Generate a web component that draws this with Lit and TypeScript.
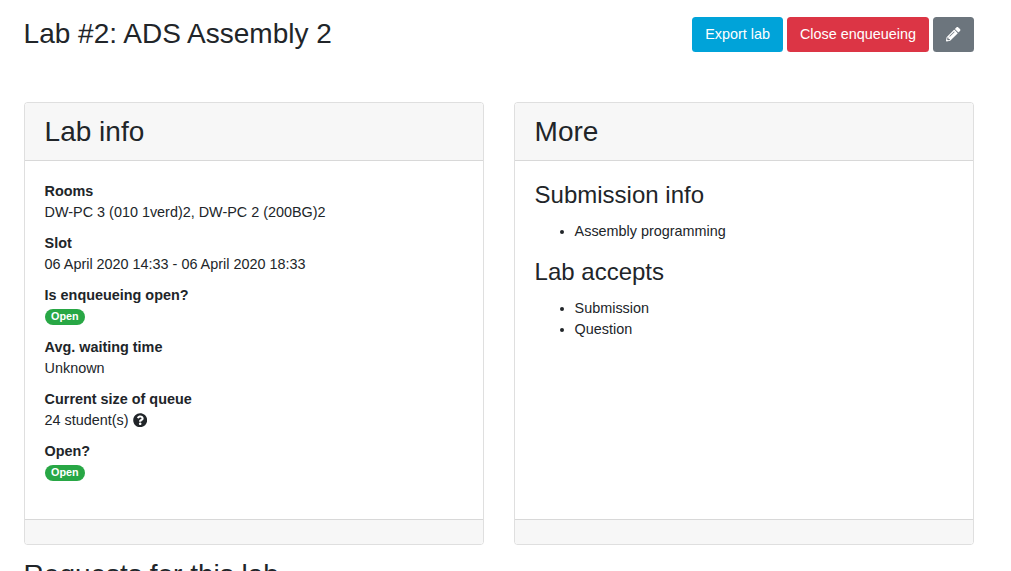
import { LitElement, html, css } from "lit";
import { customElement } from "lit/decorators.js";

@customElement("app-root")
export class AppRoot extends LitElement {
  static styles = css`
    :host {
      display: block;
      height: 571px;
      overflow: hidden;
      font-family: "Liberation Sans", Arial, sans-serif;
      font-size: 14.4px;
      line-height: 21.6px;
      color: #212529;
      background: #fff;
    }
    .page { padding: 0 37px 0 24px; }
    .top { display: flex; justify-content: space-between; align-items: flex-start; padding-top: 17px; height: 102px; box-sizing: border-box; }
    h1 { margin: 0 0 0 -0.4px; font-size: 28px; font-weight: 400; line-height: 33.6px; }
    .actions { display: flex; gap: 4px; }
    .btn { height: 35px; box-sizing: border-box; padding: 0 13px; border-radius: 3.5px; color: #fff; font-size: 14.4px; display: flex; align-items: center; }
    .info { background: #00a3d9; }
    .danger { background: #dc3545; }
    .grey { background: #6c757d; width: 41px; justify-content: center; padding: 0; }
    .cards { display: grid; grid-template-columns: 460px 460px; gap: 30px; }
    .card { height: 443px; box-sizing: border-box; border: 1px solid rgba(0,0,0,.125); border-radius: 3.5px; display: flex; flex-direction: column; overflow: hidden; }
    .head { height: 58px; box-sizing: border-box; background: #f7f7f7; border-bottom: 1px solid rgba(0,0,0,.125); padding: 0 19.6px; font-size: 28px; display: flex; align-items: center; line-height: 33.6px; }
    .body { flex: 1; padding: 20px 19.6px 0; }
    .foot { height: 25px; box-sizing: border-box; background: #f7f7f7; border-top: 1px solid rgba(0,0,0,.125); }
    .field { margin-bottom: 9.4px; }
    .label { font-weight: 700; }
    .value { min-height: 21.6px; margin-top: -0.6px; display: flex; align-items: center; gap: 4px; }
    .help { margin-bottom: 1.5px; }
    .badge { background: #28a745; color: #fff; font-size: 10.8px; font-weight: 700; line-height: 10.8px; padding: 2.5px 6.48px; border-radius: 8px; }
    h3 { margin: 0 0 10.8px; font-size: 24px; font-weight: 400; line-height: 28.8px; }
    ul { margin: 0 0 15.8px; padding-left: 40px; }
    h2 { margin: 13px 0 0 -0.4px; font-size: 28px; font-weight: 400; line-height: 33.6px; }
  `;

  field(label: string, value: unknown) {
    return html`<div class="field"><div class="label">${label}</div><div class="value">${value}</div></div>`;
  }

  render() {
    const open = html`<span class="badge">Open</span>`;
    return html`<div class="page">
      <div class="top">
        <h1>Lab #2: ADS Assembly 2</h1>
        <div class="actions">
          <div class="btn info">Export lab</div>
          <div class="btn danger">Close enqueueing</div>
          <div class="btn grey"><svg width="14.4" height="14.4" viewBox="0 0 512 512" fill="#fff"><path d="M497.9 142.1l-46.1 46.1c-4.7 4.7-12.3 4.7-17 0l-111-111c-4.7-4.7-4.7-12.3 0-17l46.1-46.1c18.7-18.7 49.1-18.7 67.9 0l60.1 60.1c18.8 18.7 18.8 49.1 0 67.9zM284.2 99.8L21.6 362.4.4 483.9c-2.9 16.4 11.4 30.6 27.8 27.8l121.5-21.3 262.6-262.6c4.7-4.7 4.7-12.3 0-17l-111-111c-4.8-4.7-12.4-4.7-17.1 0zM124.1 339.9c-5.5-5.5-5.5-14.3 0-19.8l154-154c5.5-5.5 14.3-5.5 19.8 0s5.5 14.3 0 19.8l-154 154c-5.5 5.5-14.3 5.5-19.8 0zM88 424h48v36.3l-64.5 11.3-31.1-31.1L51.7 376H88v48z"/></svg></div>
        </div>
      </div>
      <div class="cards">
        <section class="card">
          <div class="head">Lab info</div>
          <div class="body">
            ${this.field("Rooms", "DW-PC 3 (010 1verd)2, DW-PC 2 (200BG)2")}
            ${this.field("Slot", "06 April 2020 14:33 - 06 April 2020 18:33")}
            ${this.field("Is enqueueing open?", open)}
            ${this.field("Avg. waiting time", "Unknown")}
            ${this.field("Current size of queue", html`24 student(s) <svg class="help" width="14.4" height="14.4" viewBox="0 0 512 512" fill="#212529"><path d="M504 256c0 136.997-111.043 248-248 248S8 392.997 8 256C8 119.083 119.043 8 256 8s248 111.083 248 248zM262.655 90c-54.497 0-89.255 22.957-116.549 63.758-3.536 5.286-2.353 12.415 2.715 16.258l34.699 26.31c5.205 3.947 12.621 3.008 16.665-2.122 17.864-22.658 30.113-35.797 57.303-35.797 20.429 0 45.698 13.148 45.698 32.958 0 14.976-12.363 22.667-32.534 33.976C247.128 238.528 216 254.941 216 296v4c0 6.627 5.373 12 12 12h56c6.627 0 12-5.373 12-12v-1.333c0-28.462 83.186-29.647 83.186-106.667 0-58.002-60.165-102-116.531-102zM256 338c-25.365 0-46 20.635-46 46 0 25.364 20.635 46 46 46s46-20.636 46-46c0-25.365-20.635-46-46-46z"/></svg>`)}
            ${this.field("Open?", open)}
          </div>
          <div class="foot"></div>
        </section>
        <section class="card">
          <div class="head">More</div>
          <div class="body">
            <h3>Submission info</h3>
            <ul><li>Assembly programming</li></ul>
            <h3>Lab accepts</h3>
            <ul><li>Submission</li><li>Question</li></ul>
          </div>
          <div class="foot"></div>
        </section>
      </div>
      <h2>Requests for this lab</h2>
    </div>`;
  }
}
